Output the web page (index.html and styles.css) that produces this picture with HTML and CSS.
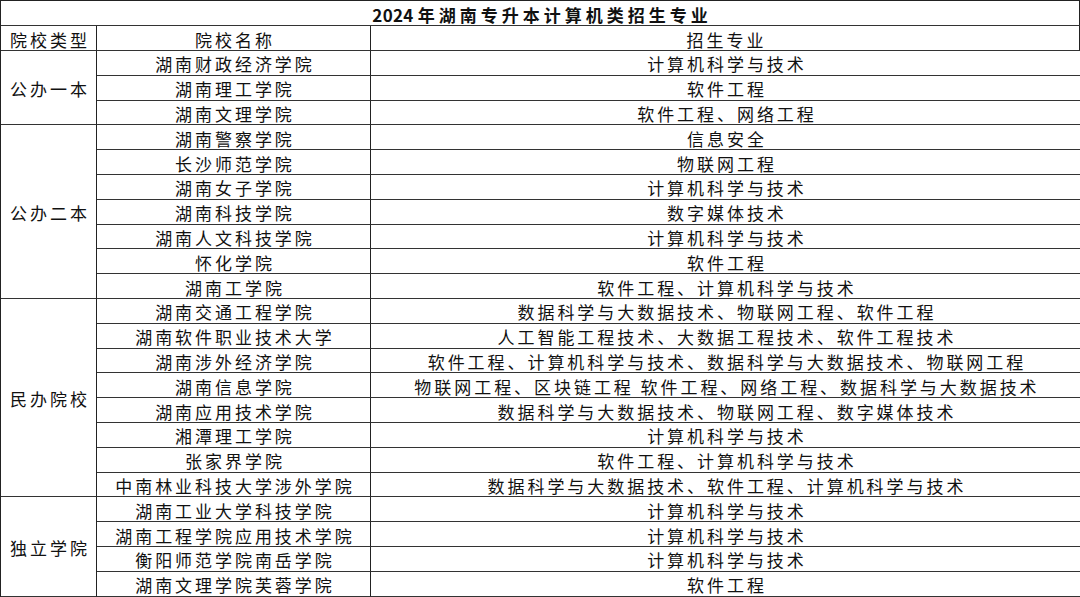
FILE: index.html
```html
<!DOCTYPE html>
<html lang="zh-CN">
<head>
<meta charset="utf-8">
<title>2024年湖南专升本计算机类招生专业</title>
<link rel="stylesheet" href="styles.css">
</head>
<body>
<div class="sheet">
  <div class="cell title"><span class="num">2024</span>年湖南专升本计算机类招生专业</div>
  <div class="cell">院校类型</div>
  <div class="cell">院校名称</div>
  <div class="cell">招生专业</div>

  <div class="cell span3">公办一本</div>
  <div class="cell">湖南财政经济学院</div><div class="cell">计算机科学与技术</div>
  <div class="cell">湖南理工学院</div><div class="cell">软件工程</div>
  <div class="cell">湖南文理学院</div><div class="cell">软件工程、网络工程</div>

  <div class="cell span7">公办二本</div>
  <div class="cell">湖南警察学院</div><div class="cell">信息安全</div>
  <div class="cell">长沙师范学院</div><div class="cell">物联网工程</div>
  <div class="cell">湖南女子学院</div><div class="cell">计算机科学与技术</div>
  <div class="cell">湖南科技学院</div><div class="cell">数字媒体技术</div>
  <div class="cell">湖南人文科技学院</div><div class="cell">计算机科学与技术</div>
  <div class="cell">怀化学院</div><div class="cell">软件工程</div>
  <div class="cell">湖南工学院</div><div class="cell">软件工程、计算机科学与技术</div>

  <div class="cell span8">民办院校</div>
  <div class="cell">湖南交通工程学院</div><div class="cell">数据科学与大数据技术、物联网工程、软件工程</div>
  <div class="cell">湖南软件职业技术大学</div><div class="cell">人工智能工程技术、大数据工程技术、软件工程技术</div>
  <div class="cell">湖南涉外经济学院</div><div class="cell">软件工程、计算机科学与技术、数据科学与大数据技术、物联网工程</div>
  <div class="cell">湖南信息学院</div><div class="cell">物联网工程、区块链工程 软件工程、网络工程、数据科学与大数据技术</div>
  <div class="cell">湖南应用技术学院</div><div class="cell">数据科学与大数据技术、物联网工程、数字媒体技术</div>
  <div class="cell">湘潭理工学院</div><div class="cell">计算机科学与技术</div>
  <div class="cell">张家界学院</div><div class="cell">软件工程、计算机科学与技术</div>
  <div class="cell">中南林业科技大学涉外学院</div><div class="cell">数据科学与大数据技术、软件工程、计算机科学与技术</div>

  <div class="cell span4">独立学院</div>
  <div class="cell">湖南工业大学科技学院</div><div class="cell">计算机科学与技术</div>
  <div class="cell">湖南工程学院应用技术学院</div><div class="cell">计算机科学与技术</div>
  <div class="cell">衡阳师范学院南岳学院</div><div class="cell">计算机科学与技术</div>
  <div class="cell">湖南文理学院芙蓉学院</div><div class="cell">软件工程</div>
</div>
</body>
</html>
```
FILE: styles.css
```css
html, body {
  margin: 0;
  padding: 0;
  background: #ffffff;
}

body {
  font-family: "Noto Sans CJK SC", "Noto Sans", sans-serif;
  color: #111111;
  overflow: hidden;
}

.sheet {
  display: grid;
  width: 1080px;
  grid-template-columns: 96px 274px 710px;
  grid-template-rows: 25px 25px repeat(22, 24.8px);
  border-top: 1px solid #222;
  border-left: 1px solid #222;
  box-sizing: border-box;
}

.cell {
  display: flex;
  align-items: center;
  justify-content: center;
  box-sizing: border-box;
  border-right: 1px solid #222;
  border-bottom: 1px solid #333;
  font-size: 17px;
  letter-spacing: 2.95px;
  text-indent: 2.95px;
  line-height: 1;
  white-space: nowrap;
  padding-top: 2px;
}

.title {
  grid-column: 1 / -1;
  font-weight: 700;
  letter-spacing: 4px;
  text-indent: 4px;
  border-right-width: 2px;
}

.title .num {
  letter-spacing: 0.3px;
}

.sheet > .cell:nth-child(4) {
  border-right-width: 2px;
}

.span3 { grid-row: span 3; }
.span7 { grid-row: span 7; }
.span8 { grid-row: span 8; }
.span4 { grid-row: span 4; }
```
